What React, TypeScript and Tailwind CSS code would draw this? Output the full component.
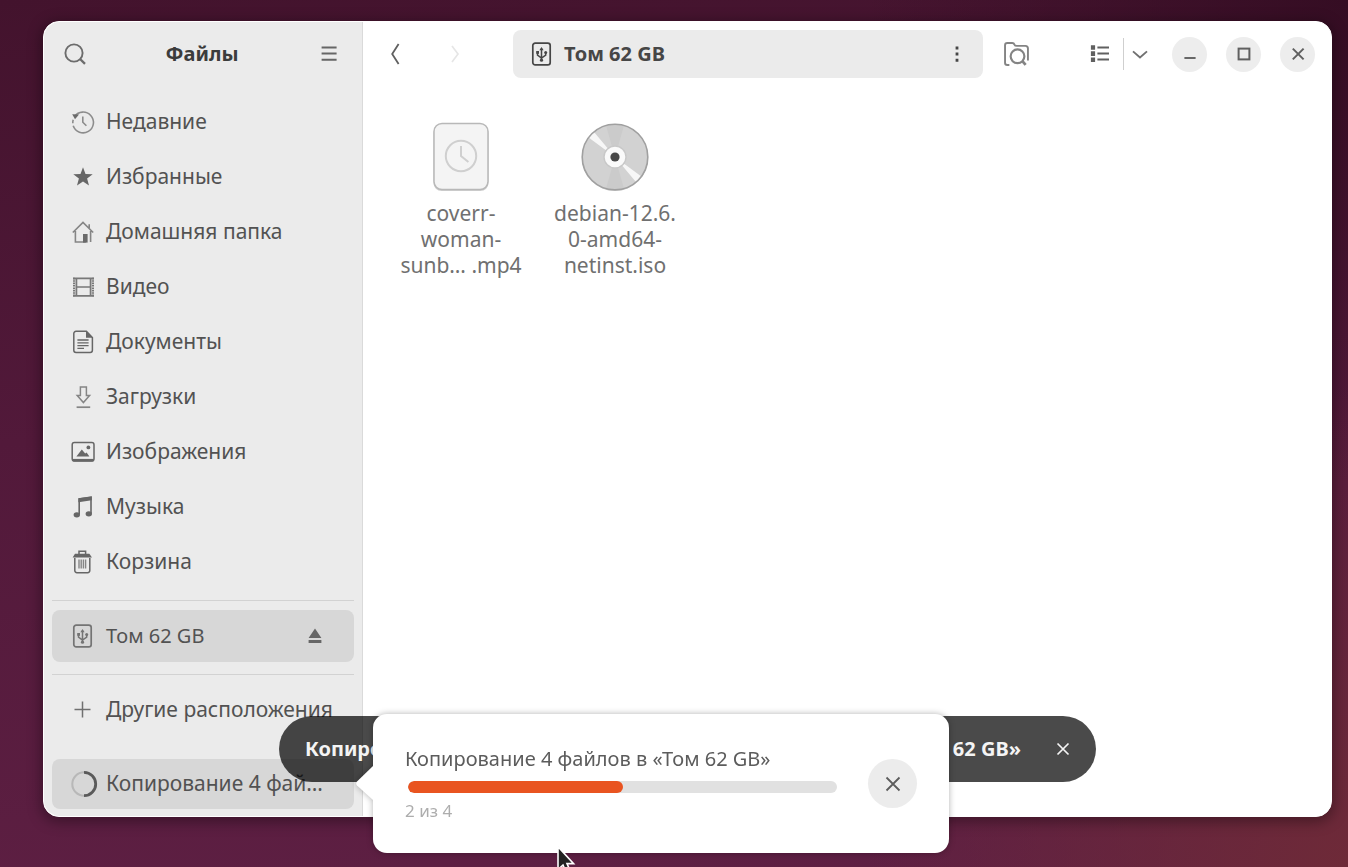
import { useState, type ReactNode } from 'react';
import { clsx } from 'clsx';

type IconProps = { size?: number; className?: string; children?: ReactNode };

function Icon({ size = 22, className, children }: IconProps) {
  return (
    <svg
      width={size}
      height={size}
      viewBox="0 0 22 22"
      fill="none"
      stroke="currentColor"
      strokeWidth="1.5"
      className={clsx('shrink-0 overflow-visible', className)}
      aria-hidden="true"
    >
      {children}
    </svg>
  );
}

const UsbIcon = ({ className }: { className?: string }) => (
  <Icon className={className}>
    <rect x="1.8" y="0.2" width="17.4" height="21.6" rx="2.4" strokeWidth="1.7" />
    <path d="M10.5 17.5V5.5M6.5 9v3.2l4 2.8 4.2-2.8V9" />
    <path d="M8.4 7.2 10.5 4l2.1 3.2z" fill="currentColor" stroke="none" />
    <rect x="5.2" y="8" width="2.8" height="2.8" fill="currentColor" stroke="none" />
    <circle cx="14.7" cy="9.4" r="1.5" fill="currentColor" stroke="none" />
    <circle cx="10.5" cy="17.2" r="1.6" fill="currentColor" stroke="none" />
  </Icon>
);

const CloseIcon = ({ size = 22, strokeWidth = 2 }: { size?: number; strokeWidth?: number }) => (
  <Icon size={size}>
    <path d="m5.5 5.5 11 11m0-11-11 11" strokeWidth={strokeWidth} />
  </Icon>
);

const PLACES: { key: string; label: string; icon: ReactNode }[] = [
  {
    key: 'recent',
    label: 'Недавние',
    icon: (
      <Icon className="text-[#8c8c8c]">
        <path d="M2.6 5.4A10.4 10.4 0 1 1 1.2 14.8" strokeWidth="1.6" />
        <path d="M.8 12.2a10.4 10.4 0 0 1 .4-3.4" strokeWidth="1.6" />
        <path d="M.2 3.2 7 3.4 3 8.2z" fill="#6a6a6a" stroke="none" />
        <path d="M10.8 5.4v5.8l3.6 3.6" strokeWidth="1.6" />
      </Icon>
    ),
  },
  {
    key: 'starred',
    label: 'Избранные',
    icon: (
      <Icon>
        <path
          d="m11 1.2 2.5 6.7 7.2.3-5.6 4.4 1.9 7-6-4-6 4 1.9-7L1.3 8.2l7.2-.3z"
          fill="currentColor"
          stroke="none"
        />
      </Icon>
    ),
  },
  {
    key: 'home',
    label: 'Домашняя папка',
    icon: (
      <Icon className="text-[#858585]">
        <path d="M.8 11.5 11 1.4l10.2 10.1M3.4 10v11h10.4M18.6 10v11M17.2 7V3.2" strokeWidth="1.6" />
        <rect x="11" y="13" width="4.6" height="8.6" fill="#6a6a6a" stroke="none" />
      </Icon>
    ),
  },
  {
    key: 'videos',
    label: 'Видео',
    icon: (
      <Icon className="text-[#787878]">
        <path d="M2 1.8v18.6M21 1.8v18.6" strokeWidth="2" strokeDasharray="1.6 0.8" />
        <path d="M4.4 2v18M18.6 2v18" strokeWidth="1.8" />
        <path d="M1 2.4h21M4.4 11h14M1 19.8h21" strokeWidth="1.7" />
      </Icon>
    ),
  },
  {
    key: 'documents',
    label: 'Документы',
    icon: (
      <Icon>
        <path d="M4 .3h10.4l6 6.2v12.8a2.2 2.2 0 0 1-2.2 2.2H4a2.2 2.2 0 0 1-2.2-2.2V2.5A2.2 2.2 0 0 1 4 .3z" />
        <path d="M14 0v6.8h6.4z" fill="currentColor" stroke="none" />
        <path d="M5.4 9h11.2M5.4 11.8h11.2M5.4 14.6h11.2M5.4 17.4h6.6" strokeWidth="1.3" />
      </Icon>
    ),
  },
  {
    key: 'downloads',
    label: 'Загрузки',
    icon: (
      <Icon className="text-[#858585]">
        <path d="M8.4 1v8.4H5.2l6.2 7.2 6.2-7.2h-3.2V1z" />
        <path d="M4.6 21.2h13.6" strokeWidth="1.7" />
      </Icon>
    ),
  },
  {
    key: 'pictures',
    label: 'Изображения',
    icon: (
      <Icon>
        <rect x="0.2" y="1.6" width="21.8" height="18.4" rx="2.2" />
        <path d="M.8 19.2h20.6" strokeWidth="2.6" />
        <path d="m4.4 15.4 5.4-7 3.4 4 1.4-1 2.8 4z" fill="currentColor" stroke="none" />
        <circle cx="16.4" cy="6.4" r="1.9" fill="currentColor" stroke="none" />
      </Icon>
    ),
  },
  {
    key: 'music',
    label: 'Музыка',
    icon: (
      <Icon>
        <path d="M7.2 18.5V3L19 1.4v16" strokeWidth="1.6" />
        <path d="M6.4 2.2 19.8.2v4L6.4 6.2z" fill="currentColor" stroke="none" />
        <ellipse cx="4.8" cy="18.8" rx="3.2" ry="2.6" fill="currentColor" stroke="none" />
        <ellipse cx="16.8" cy="17.8" rx="3.2" ry="2.6" fill="currentColor" stroke="none" />
      </Icon>
    ),
  },
  {
    key: 'trash',
    label: 'Корзина',
    icon: (
      <Icon>
        <path d="M2.8 7v12.4A2.2 2.2 0 0 0 5 21.8h10.6a2.2 2.2 0 0 0 2.2-2.4V7" />
        <path d="M.6 6.4 3 2.8h14.4l2.6 3.6z" fill="currentColor" stroke="none" />
        <path d="M7 3V.3h6.6V3" />
        <path d="M7 8.6v8.8M9.2 8.6v8.8M11.4 8.6v8.8M13.6 8.6v8.8" strokeWidth="1.4" stroke="#858585" />
      </Icon>
    ),
  },
];

const ROW = 'flex h-[52px] w-full items-center gap-3 rounded-lg px-5 text-left';

function Sidebar() {
  const [open, setOpen] = useState(true);

  return (
    <aside className="flex w-[319px] shrink-0 flex-col rounded-l-2xl border-r border-[#dadada] bg-[#ebebeb]">
      <header className="flex h-16 items-center justify-between px-5">
        <button type="button" aria-label="Поиск" className="text-[#6c6c6c]">
          <Icon>
            <circle cx="10" cy="10" r="8.6" strokeWidth="1.9" />
            <path d="m16 16 5 4.8" strokeWidth="2.4" />
          </Icon>
        </button>
        <h1 className="text-xl font-bold text-[#3c3c3c]">Файлы</h1>
        <button type="button" aria-label="Меню" className="mr-0.5 text-[#666]">
          <Icon>
            <path d="M3.6 4.4h15M3.6 10.6h15M3.6 16.8h15" strokeWidth="2" />
          </Icon>
        </button>
      </header>

      <nav className="flex flex-1 flex-col px-2 pt-2.5">
        <ul className="flex flex-col gap-[3px]">
          {PLACES.map((p) => (
            <li key={p.key}>
              <button type="button" className={ROW}>
                <span className="text-[#666]">{p.icon}</span>
                {p.label}
              </button>
            </li>
          ))}
        </ul>

        <hr className="mt-3 mb-[9px] border-[#d2d2d2]" />
        <div className="flex items-center rounded-lg bg-[#d7d7d7]">
          <button type="button" className={ROW}>
            <UsbIcon className="text-[#747474]" />
            <span className="text-xl">Том 62 GB</span>
          </button>
          <button type="button" aria-label="Извлечь" className="mr-7 text-[#666]">
            <Icon>
              <path d="M11 3.6 17.4 13H4.6zM4.6 15h12.8v3H4.6z" fill="currentColor" stroke="none" />
            </Icon>
          </button>
        </div>
        <hr className="mt-3 mb-[9px] border-[#d2d2d2]" />

        <button type="button" className={ROW}>
          <Icon className="text-[#707070]">
            <path d="M10.5 2.5v16M2.5 10.5h16" />
          </Icon>
          <span className="whitespace-nowrap">Другие расположения</span>
        </button>
      </nav>

      <div className="relative px-2 pb-[7px]">
        <button
          type="button"
          onClick={() => setOpen(!open)}
          className="flex h-[50px] w-full items-center gap-2 rounded-lg bg-[#d7d7d7] px-[18px] text-left whitespace-nowrap"
        >
          <Icon size={28}>
            <circle cx="11" cy="11" r="9.2" stroke="#b8b8b8" strokeWidth="1.6" />
            <path d="M11 1.8a9.2 9.2 0 0 1 0 18.4" stroke="#5a5a5a" strokeWidth="2.2" />
          </Icon>
          Копирование 4 фай…
        </button>
        {open && <ProgressPopover />}
      </div>
    </aside>
  );
}

function ProgressPopover() {
  const progress = 50;

  return (
    <div className="absolute -bottom-[37px] left-full z-20 ml-[11px] flex h-[139px] w-[576px] items-center gap-7 rounded-[14px] bg-white px-8 drop-shadow-[0_0_3px_rgba(0,0,0,0.3)]">
      <svg width="17" height="36" viewBox="0 0 17 36" className="absolute top-[51px] right-full" aria-hidden="true">
        <path d="M17 1v34L1 20.4q-1.6-2 0-3.8z" fill="#fff" />
      </svg>
      <div className="flex min-w-0 flex-1 flex-col">
        <p className="text-xl leading-7 whitespace-nowrap text-[#5c5c5c]">Копирование 4 файлов в «Том 62 GB»</p>
        <div
          role="progressbar"
          aria-valuenow={progress}
          aria-label="Копирование"
          className="mx-[3px] mt-2 mb-1.5 h-3 overflow-hidden rounded-full bg-[#e1e1e1]"
        >
          <div className="h-full rounded-full bg-[#e95420]" style={{ width: `${progress}%` }} />
        </div>
        <p className="text-[17px] leading-6 text-[#adadad]">2 из 4</p>
      </div>
      <button
        type="button"
        aria-label="Отменить"
        className="flex size-[49px] items-center justify-center rounded-full bg-[#ececec] text-[#5c5c5c]"
      >
        <CloseIcon size={26} strokeWidth={1.5} />
      </button>
    </div>
  );
}

function HeaderBar() {
  return (
    <header className="flex h-16 items-center pr-4 pl-[22px] text-[#606060]">
      <button type="button" aria-label="Назад">
        <Icon>
          <path d="M13.6 1 7.2 11l6.4 10" strokeWidth="1.8" />
        </Icon>
      </button>
      <button type="button" aria-label="Вперёд" disabled className="ml-9 text-[#e6e6e6]">
        <Icon>
          <path d="m9 3 6 8-6 8" strokeWidth="1.7" />
        </Icon>
      </button>

      <div className="ml-12 flex h-12 flex-1 items-center rounded-lg bg-[#ebebeb] pr-[15px] pl-[18px] text-[#464646]">
        <UsbIcon />
        <span className="ml-[11px] flex-1 font-bold">Том 62 GB</span>
        <button type="button" aria-label="Меню папки">
          <Icon>
            <path d="M11 3.4v3M11 9.6v3M11 15.8v3" strokeWidth="2.8" />
          </Icon>
        </button>
      </div>

      <button type="button" aria-label="Поиск в папке" className="ml-5 text-[#848484]">
        <Icon size={28}>
          <path d="M5 19.6H3.4A1.8 1.8 0 0 1 1.6 17.8V4.2A1.8 1.8 0 0 1 3.4 2.4h3.8Q8.6 2.4 9 3.6q.4 1 1.8 1h6.8a2 2 0 0 1 2 2v9.6" />
          <circle cx="11.4" cy="12.8" r="5.4" strokeWidth="1.7" />
          <path d="m15.2 16.6 2.6 3" strokeWidth="2.2" />
        </Icon>
      </button>
      <button type="button" aria-label="Список" className="ml-[58px]">
        <Icon>
          <path d="M8.4 4.6H20M8.4 10.6H20M8.4 16.6H20" strokeWidth="2" />
          <path d="M4 2.2v4.6M4 8.3v4.6M4 14.4V19" strokeWidth="4.2" />
        </Icon>
      </button>
      <span className="mx-3 h-8 w-px bg-[#cfcfcf]" />
      <button type="button" aria-label="Вид" className="-mx-2 text-[#707070]">
        <Icon>
          <path d="m5 8.4 7 6 7-6" strokeWidth="1.9" />
        </Icon>
      </button>

      <div className="ml-[30px] flex gap-[19px]">
        {[
          { label: 'Свернуть', icon: <path d="M5.4 15h11.2" strokeWidth="1.9" /> },
          { label: 'Развернуть', icon: <rect x="5.6" y="5.6" width="10.8" height="10.8" strokeWidth="2" /> },
          { label: 'Закрыть', icon: <path d="m5.8 5.6 10.8 10.8m0-10.8L5.8 16.4" strokeWidth="2" /> },
        ].map((b) => (
          <button
            key={b.label}
            type="button"
            aria-label={b.label}
            className="flex size-[35px] items-center justify-center rounded-full bg-[#ededed]"
          >
            <Icon>{b.icon}</Icon>
          </button>
        ))}
      </div>
    </header>
  );
}

function VideoThumb() {
  return (
    <svg width="60" height="70" viewBox="0 0 60 70" fill="none" aria-hidden="true">
      <rect x="2.5" y="3" width="55" height="66" rx="8" fill="#d0d0d0" />
      <rect x="3" y="1.5" width="54" height="66" rx="8" fill="#f4f4f4" stroke="#b8b8b8" strokeWidth="1.5" />
      <circle cx="30" cy="34" r="15.2" stroke="#cfcfcf" strokeWidth="2" />
      <path d="M30 24v10l7.4 6" stroke="#cfcfcf" strokeWidth="2" />
    </svg>
  );
}

function DiscThumb() {
  return (
    <svg width="70" height="70" viewBox="0 0 70 70" fill="none" aria-hidden="true">
      <circle cx="35" cy="36" r="33" fill="#888" opacity="0.5" />
      <circle cx="35" cy="35" r="33" fill="#d2d2d2" />
      <path d="M35 35 26 3.4a33 33 0 0 1 18 0zM35 35l9 31.6a33 33 0 0 1-18 0z" fill="#cbcbcb" />
      <path d="M35 35 8.6 15.4l5-6zM35 35l26.4 19.6-5 6z" fill="#f7f7f7" />
      <circle cx="35" cy="35" r="32.8" stroke="#a0a0a0" strokeWidth="1.6" />
      <circle cx="35" cy="35" r="11" fill="#fafafa" stroke="#c8c8c8" strokeWidth="1.4" />
      <circle cx="35" cy="35" r="4.6" fill="#484848" />
    </svg>
  );
}

const FILES = [
  { lines: ['coverr-', 'woman-', 'sunb… .mp4'], thumb: <VideoThumb /> },
  { lines: ['debian-12.6.', '0-amd64-', 'netinst.iso'], thumb: <DiscThumb /> },
];

export default function App() {
  return (
    <div className="relative flex min-h-screen overflow-hidden bg-[radial-gradient(circle_at_100%_100%,#6e2a38_0%,rgba(100,34,60,0)_30%),radial-gradient(circle_at_100%_0%,#350d23_0%,rgba(53,13,35,0)_30%),linear-gradient(175deg,#43132d_0%,#52193a_45%,#5f2044_100%)] pt-[21px] pr-4 pb-[50px] pl-[43px] font-['Noto_Sans',sans-serif] text-[21px] text-[#525252]">
      <div className="relative flex flex-1 rounded-2xl border border-white bg-white shadow-[0_3px_14px_2px_rgba(0,0,0,0.35)]">
        <Sidebar />

        <main className="min-w-0 flex-1 text-xl">
          <HeaderBar />
          <ul className="flex px-[21px] pt-9">
            {FILES.map((f) => (
              <li key={f.lines[0]} className="flex w-[154px] flex-col items-center gap-2">
                {f.thumb}
                <p className="text-center text-[21px] leading-[26px] text-[#707070]">
                  {f.lines.map((line) => (
                    <span key={line} className="block whitespace-nowrap">
                      {line}
                    </span>
                  ))}
                </p>
              </li>
            ))}
          </ul>
        </main>

        {/* Toast, centred over the whole window */}
        <div className="absolute inset-x-0 bottom-[34px] z-10 flex justify-center text-xl">
          <div className="flex h-[66px] w-[817px] items-center justify-between rounded-full bg-black/71 pr-[22px] pl-[26px] font-bold text-[#f4f4f4]">
            <span>Копиро</span>
            <span className="flex items-center gap-[31px]">
              62 GB»
              <button type="button" aria-label="Скрыть">
                <CloseIcon strokeWidth={1.7} />
              </button>
            </span>
          </div>
        </div>
      </div>

      {/* Mouse pointer */}
      <svg width="22" height="32" viewBox="0 0 22 32" className="absolute top-[845px] left-[556px] z-30" aria-hidden="true">
        <path
          d="M2 1.6v23l5-4.6 3.6 8.6 4-1.8-3.6-8.2h6.6z"
          fill="#222"
          stroke="#fff"
          strokeWidth="1.6"
        />
      </svg>
    </div>
  );
}
